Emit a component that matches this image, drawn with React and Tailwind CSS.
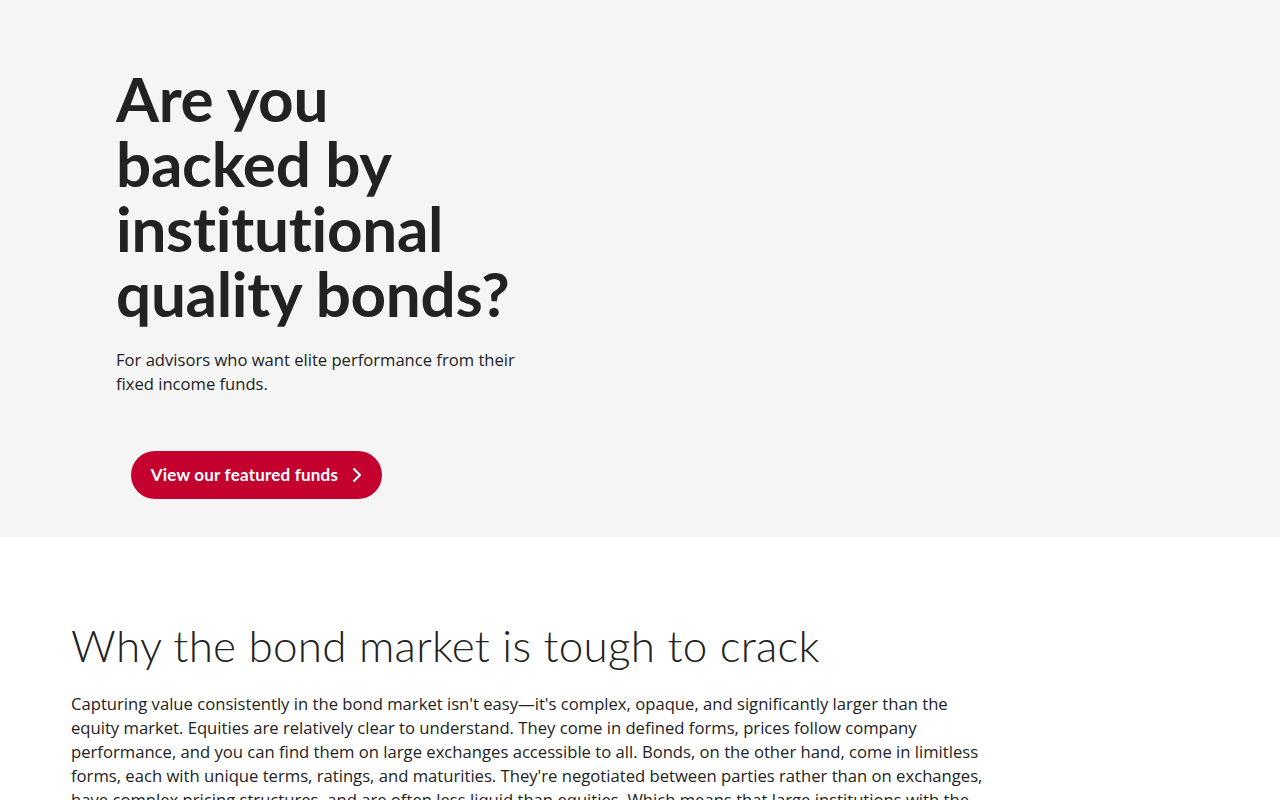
export default function App() {
  return (
    <div className="min-h-screen bg-white text-[#222222]" style={{ fontFamily: "'Open Sans', 'Noto Sans', sans-serif" }}>
      <section className="h-[537px] bg-[#f5f5f5]">
        <div className="pl-[116px] pt-[66px]">
          <h1
            className="text-[62px] font-bold leading-[65px] tracking-[-0.3px] text-[#222222]"
            style={{ fontFamily: "Lato, sans-serif" }}
          >
            Are you
            <br />
            backed by
            <br />
            institutional
            <br />
            quality bonds?
          </h1>
          <p className="mt-[22px] text-[16.6px] leading-[24px] text-[#222222]">
            For advisors who want elite performance from their
            <br />
            fixed income funds.
          </p>
          <div className="mt-[55px] pl-[15px]">
            <button
              className="flex h-[48px] w-[251px] items-center justify-center gap-[14px] rounded-full bg-[#c4002f] text-[17px] font-bold tracking-[0.2px] text-white"
              style={{ fontFamily: "Lato, sans-serif" }}
            >
              <span>View our featured funds</span>
              <svg width="10" height="16" viewBox="0 0 10 16" fill="none">
                <path d="M2 2l6 6-6 6" stroke="white" strokeWidth="2.2" strokeLinecap="round" strokeLinejoin="round" />
              </svg>
            </button>
          </div>
        </div>
      </section>
      <section className="px-[71px] pt-[82px]">
        <h2
          className="text-[44px] font-light leading-[52px] tracking-[0.25px]"
          style={{ fontFamily: "Lato, sans-serif" }}
        >
          Why the bond market is tough to crack
        </h2>
        <p className="mt-[21px] whitespace-nowrap text-[16.65px] leading-[24px]">
          Capturing value consistently in the bond market isn't easy—it's complex, opaque, and significantly larger than the
          <br />
          equity market. Equities are relatively clear to understand. They come in defined forms, prices follow company
          <br />
          performance, and you can find them on large exchanges accessible to all. Bonds, on the other hand, come in limitless
          <br />
          forms, each with unique terms, ratings, and maturities. They're negotiated between parties rather than on exchanges,
          <br />
          have complex pricing structures, and are often less liquid than equities. Which means that large institutions with the
        </p>
      </section>
    </div>
  );
}
